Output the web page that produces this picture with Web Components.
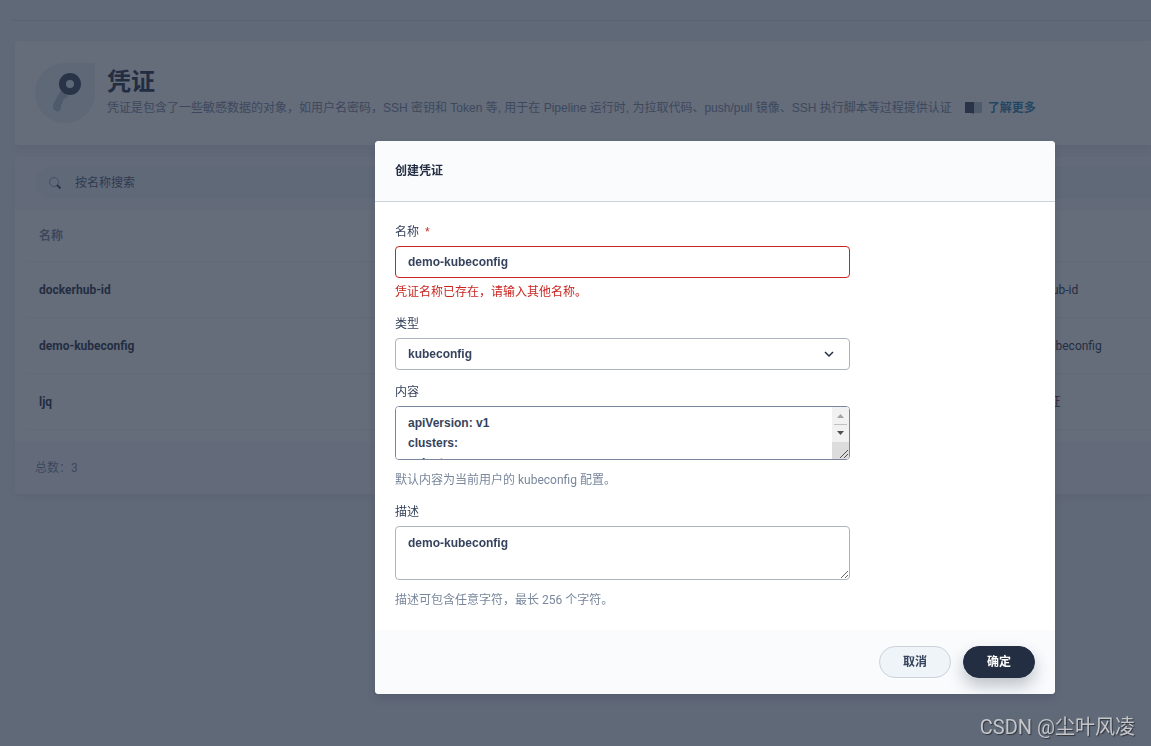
<!DOCTYPE html>
<html lang="zh-CN">
<head>
<meta charset="utf-8">
<title>凭证</title>
<style>
  body {
    margin: 0;
    min-height: 100vh;
    overflow: hidden;
    background: #eff4f9;
    color: #242e42;
    font: 12px/20px Roboto, "Noto Sans CJK SC", sans-serif;
  }
</style>
</head>
<body>
<page-shell>
  <page-banner heading="凭证">
    凭证是包含了一些敏感数据的对象，如用户名密码，SSH 密钥和 Token 等, 用于在 Pipeline 运行时, 为拉取代码、push/pull 镜像、SSH 执行脚本等过程提供认证
  </page-banner>
  <credential-table></credential-table>
</page-shell>
<modal-dialog heading="创建凭证">
  <form-field label="名称" kind="input" value="demo-kubeconfig" required error="凭证名称已存在，请输入其他名称。"></form-field>
  <form-field label="类型" kind="select" value="kubeconfig"></form-field>
  <form-field label="内容" kind="textarea" active value="apiVersion: v1&#10;clusters:&#10;- cluster:&#10;    server: kubernetes" hint="默认内容为当前用户的 kubeconfig 配置。"></form-field>
  <form-field label="描述" kind="textarea" value="demo-kubeconfig" hint="描述可包含任意字符，最长 256 个字符。"></form-field>
  <round-button slot="footer">取消</round-button>
  <round-button slot="footer" kind="control">确定</round-button>
</modal-dialog>
<water-mark>CSDN @尘叶风凌</water-mark>

<script>
class PageShell extends HTMLElement {
  constructor() {
    super();
    this.attachShadow({ mode: 'open' });
    this.shadowRoot.innerHTML = `
      <style>
        :host {
          display: block;
        }

        header {
          height: 20px;
          margin-left: 12px;
          border-bottom: 1px solid #dbe0e8;
        }

        main {
          display: flex;
          flex-direction: column;
          gap: 12px;
          padding: 20px 0 0 15px;
        }
      </style>
      <header></header>
      <main><slot></slot></main>
    `;
  }
}

class PageBanner extends HTMLElement {
  constructor() {
    super();
    this.attachShadow({ mode: 'open' });
    this.shadowRoot.innerHTML = `
      <style>
        :host {
          display: flex;
          align-items: center;
          gap: 12px;
          padding: 22px 20px;
          border-radius: 4px 0 0 4px;
          background: #fff;
          box-shadow: 0 4px 8px rgba(36, 46, 66, 0.06);
          white-space: nowrap;
        }

        .icon {
          flex: none;
          width: 60px;
          height: 60px;
          border-radius: 30px 0 30px 30px;
          background: #eaf1f6;
        }

        h1 {
          margin: 0;
          font-size: 24px;
          line-height: 32px;
        }

        p {
          display: flex;
          align-items: center;
          margin: 0 0 2px;
          color: #79879c;
          font-family: "Liberation Sans", "Noto Sans CJK SC", sans-serif;
        }

        a {
          display: flex;
          align-items: center;
          gap: 4px;
          margin-left: 12px;
          color: #2484b0;
          font-weight: bold;
          text-decoration: none;
        }
      </style>
      <svg class="icon" viewBox="0 0 60 60">
        <path d="M26 27l7 6c-2 4-4 1-5 5s-2 3-2 6c0 7-8 5-8 0 0-4 2-6 3-8z" fill="#b6c2cd"/>
        <circle cx="35" cy="21" r="7.5" fill="none" stroke="#36435c" stroke-width="7"/>
      </svg>
      <div>
        <h1></h1>
        <p>
          <slot></slot>
          <a href="#">
            <svg width="20" height="16" viewBox="0 0 20 16">
              <path d="M10 2h8v11h-8z" fill="#b6c2cd"/>
              <path d="M1 2h9v12l-2-1H1z" fill="#36435c"/>
            </svg>
            了解更多
          </a>
        </p>
      </div>
    `;
    this.shadowRoot.querySelector('h1').textContent = this.getAttribute('heading');
  }
}

class CredentialTable extends HTMLElement {
  constructor() {
    super();
    this._rows = [
      ['dockerhub-id', 'dockerhub-id'],
      ['demo-kubeconfig', 'demo-kubeconfig'],
      ['ljq', 'ljq 的凭证'],
    ];
    this.attachShadow({ mode: 'open' });
    this.shadowRoot.innerHTML = `
      <style>
        :host {
          display: block;
          border-radius: 4px 0 0 4px;
          background: #fff;
          box-shadow: 0 4px 8px rgba(36, 46, 66, 0.06);
        }

        .toolbar {
          padding: 10px 0 10px 20px;
          background: #f9fbfd;
          border-bottom: 1px solid #eff4f9;
        }

        .search {
          display: flex;
          align-items: center;
          gap: 12px;
          height: 32px;
          padding-left: 12px;
          border-radius: 16px 0 0 16px;
          background: #eff4f9;
        }

        input {
          flex: 1;
          border: 0;
          padding: 0;
          background: none;
          font: inherit;
        }

        input::placeholder {
          color: #4a5974;
        }

        .body {
          padding: 0 0 12px 12px;
        }

        table {
          width: 100%;
          table-layout: fixed;
          border-collapse: collapse;
          text-align: left;
        }

        th, td {
          height: 55px;
          padding: 0 12px;
          border-bottom: 1px solid #eff4f9;
        }

        th {
          height: 51px;
          color: #79879c;
        }

        .name {
          font-weight: bold;
        }

        .note {
          width: 130px;
        }

        footer {
          padding: 16px 20px;
          border-radius: 0 0 0 4px;
          background: #f9fbfd;
          color: #79879c;
        }
      </style>
      <div class="toolbar">
        <label class="search">
          <svg width="16" height="16" viewBox="0 0 16 16" fill="none">
            <circle cx="7" cy="7" r="4.5" stroke="#8b99ab"/>
            <path d="M10 10l3.500 3.500" stroke="#36435c" stroke-width="2"/>
          </svg>
          <input type="text" placeholder="按名称搜索" aria-label="按名称搜索">
        </label>
      </div>
      <div class="body">
        <table>
          <thead><tr><th>名称</th><th class="note"></th></tr></thead>
          <tbody></tbody>
        </table>
      </div>
      <footer></footer>
    `;
    this.shadowRoot.querySelector('tbody').innerHTML = this._rows.map(
      ([name, note]) => `<tr><td class="name">${name}</td><td>${note}</td></tr>`
    ).join('');
    this.shadowRoot.querySelector('footer').textContent = `总数：${this._rows.length}`;
  }
}

class ModalDialog extends HTMLElement {
  constructor() {
    super();
    this.attachShadow({ mode: 'open' });
    this.shadowRoot.innerHTML = `
      <style>
        :host {
          position: fixed;
          inset: 0;
          display: flex;
          align-items: flex-start;
          justify-content: flex-end;
          padding: 141px 96px 0 20px;
          background: rgba(36, 46, 66, 0.7);
        }

        section {
          width: 100%;
          max-width: 680px;
          overflow: hidden;
          border-radius: 4px;
          background: #fff;
          box-shadow: 0 4px 8px rgba(36, 46, 66, 0.2);
        }

        h2 {
          margin: 0;
          padding: 20px;
          border-bottom: 1px solid #ccd3db;
          background: #f9fbfd;
          font-size: 12px;
          line-height: 20px;
        }

        form {
          display: flex;
          flex-direction: column;
          gap: 12px;
          padding: 20px;
        }

        footer {
          display: flex;
          justify-content: flex-end;
          gap: 12px;
          padding: 16px 20px;
          background: #f9fbfd;
        }
      </style>
      <section role="dialog" aria-labelledby="title">
        <h2 id="title"></h2>
        <form><slot></slot></form>
        <footer><slot name="footer"></slot></footer>
      </section>
    `;
    this.shadowRoot.querySelector('h2').textContent = this.getAttribute('heading');
  }
}

class FormField extends HTMLElement {
  constructor() {
    super();
    this.attachShadow({ mode: 'open' });
    this.shadowRoot.innerHTML = `
      <style>
        :host {
          display: block;
          max-width: 455px;
          color: #36435c;
        }

        label {
          display: block;
          margin-bottom: 4px;
        }

        .star {
          margin-left: 6px;
          color: #ca2621;
          font-family: "Liberation Sans", sans-serif;
        }

        .control {
          position: relative;
          display: flex;
        }

        input, select, textarea {
          flex: 1;
          min-width: 0;
          box-sizing: border-box;
          height: 32px;
          margin: 0;
          padding: 5px 12px;
          border: 1px solid #abb4be;
          border-radius: 4px;
          outline: 0;
          background: #fff;
          color: #36435c;
          font: bold 12px/20px "Liberation Sans", "Noto Sans CJK SC", sans-serif;
        }

        select {
          appearance: none;
        }

        textarea {
          height: 54px;
          padding: 6px 12px;
          resize: vertical;
        }

        textarea.active {
          border-color: #79879c;
          scrollbar-width: none;
        }

        .chevron {
          position: absolute;
          top: 8px;
          right: 13px;
          pointer-events: none;
        }

        .scrollbar {
          position: absolute;
          top: 1px;
          right: 1px;
          border-radius: 0 3px 3px 0;
          pointer-events: none;
        }

        p {
          margin: 4px 0 0;
          color: #79879c;
        }

        .control.tall + p {
          margin-top: 10px;
        }

        :host([error]) input {
          border-color: #ca2621;
        }

        :host([error]) p {
          color: #ca2621;
        }
      </style>
      <label for="field"></label>
      <div class="control"></div>
    `;
    this._build();
  }

  _build() {
    const kind = this.getAttribute('kind');
    const value = this.getAttribute('value');
    const message = this.getAttribute('error') || this.getAttribute('hint');
    const label = this.shadowRoot.querySelector('label');
    const control = this.shadowRoot.querySelector('.control');
    const field = document.createElement(kind);

    label.textContent = this.getAttribute('label');
    if (this.hasAttribute('required')) {
      label.insertAdjacentHTML('beforeend', '<span class="star">*</span>');
    }

    field.id = 'field';
    if (kind === 'select') {
      field.add(new Option(value));
    } else {
      field.value = value;
    }
    field.classList.toggle('active', this.hasAttribute('active'));
    control.classList.toggle('tall', kind === 'textarea');
    control.appendChild(field);

    if (kind === 'select') {
      control.insertAdjacentHTML('beforeend', `
        <svg class="chevron" width="16" height="16" viewBox="0 0 16 16" fill="none">
          <path d="M4 6l4 4 4-4" stroke="#242e42" stroke-width="1.500"/>
        </svg>
      `);
    }

    if (this.hasAttribute('active')) {
      control.insertAdjacentHTML('beforeend', `
        <svg class="scrollbar" width="17" height="52" viewBox="0 0 17 52">
          <path d="M0 0h17v35H0z" fill="#f1f1f1"/>
          <path d="M0 35h17v17H0z" fill="#dcdcdc"/>
          <path d="M5 11l3.500-4 3.500 4z" fill="#a3a3a3"/>
          <path d="M2 17h13v1H2z" fill="#c1c1c1"/>
          <path d="M5 24h7l-3.500 4z" fill="#505050"/>
          <path d="M8 51l8-8M12 51l4-4" stroke="#505050" fill="none"/>
        </svg>
      `);
    }

    if (message) {
      const p = document.createElement('p');
      p.textContent = message;
      this.shadowRoot.appendChild(p);
    }
  }
}

class RoundButton extends HTMLElement {
  constructor() {
    super();
    this.attachShadow({ mode: 'open' });
    this.shadowRoot.innerHTML = `
      <style>
        :host {
          display: block;
        }

        button {
          display: block;
          height: 32px;
          padding: 5px 23px;
          border: 1px solid #ccd3db;
          border-radius: 16px;
          background: #eff4f9;
          color: #36435c;
          font: inherit;
          font-weight: bold;
        }

        :host([kind=control]) button {
          border-color: #242e42;
          background: #242e42;
          color: #fff;
          box-shadow: 0 8px 16px rgba(36, 46, 66, 0.28);
        }
      </style>
      <button type="button"><slot></slot></button>
    `;
  }
}

class WaterMark extends HTMLElement {
  constructor() {
    super();
    this.attachShadow({ mode: 'open' });
    this.shadowRoot.innerHTML = `
      <style>
        :host {
          position: fixed;
          right: 16px;
          bottom: 3px;
          color: #c4c6c9;
          font-size: 20px;
          line-height: 32px;
          text-shadow: 1px 1px 1px rgba(0, 0, 0, 0.5);
        }
      </style>
      <slot></slot>
    `;
  }
}

customElements.define('page-shell', PageShell);
customElements.define('page-banner', PageBanner);
customElements.define('credential-table', CredentialTable);
customElements.define('modal-dialog', ModalDialog);
customElements.define('form-field', FormField);
customElements.define('round-button', RoundButton);
customElements.define('water-mark', WaterMark);
</script>
</body>
</html>
